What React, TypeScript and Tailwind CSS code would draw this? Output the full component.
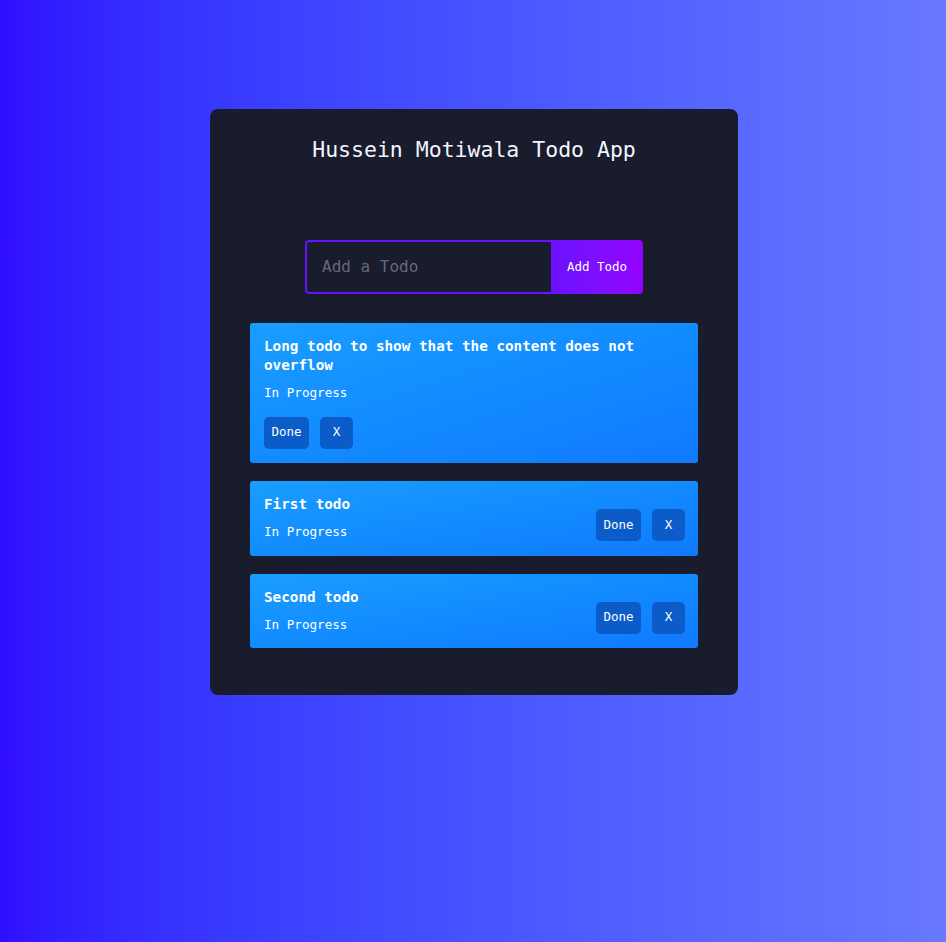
import { useState } from "react";

type Todo = { id: number; title: string; status: string };

const initialTodos: Todo[] = [
  { id: 1, title: "Long todo to show that the content does not overflow", status: "In Progress" },
  { id: 2, title: "First todo", status: "In Progress" },
  { id: 3, title: "Second todo", status: "In Progress" },
];

export default function App() {
  const [todos, setTodos] = useState(initialTodos);
  const [text, setText] = useState("");

  const addTodo = () => {
    if (!text.trim()) return;
    setTodos([...todos, { id: Date.now(), title: text, status: "In Progress" }]);
    setText("");
  };

  return (
    <div
      className="min-h-screen w-full bg-linear-to-r from-[#300dff] to-[#6878ff] pt-[109px] pl-[2px]"
      style={{ fontFamily: '"DejaVu Sans Mono", "Liberation Mono", monospace' }}
    >
      <div className="mx-auto w-[528px] rounded-lg bg-[#181c2d] px-10 pt-[27px] pb-[47px]">
        <h1 className="text-center text-[21.5px] leading-[28px] text-[#f4f4ff]">
          Hussein Motiwala Todo App
        </h1>

        {/* Add todo form */}
        <div className="mt-[76px] flex justify-center">
          <div className="flex h-[54px] w-[338px] overflow-hidden rounded-[4px]">
            <input
              value={text}
              onChange={(e) => setText(e.target.value)}
              placeholder="Add a Todo"
              className="w-[246px] rounded-l-[4px] border-2 border-r-0 border-[#6a12ff] bg-transparent px-[15px] text-[16px] text-white outline-none placeholder:text-[#666a78]"
            />
            <button
              onClick={addTodo}
              className="flex-1 bg-linear-to-r from-[#6a10ff] to-[#9302ff] text-[12.5px] text-white"
            >
              Add Todo
            </button>
          </div>
        </div>

        {/* Todo list */}
        <div className="mt-[29px] flex flex-col gap-[18px]">
          {todos.map((todo) => (
            <div
              key={todo.id}
              className="flex flex-wrap items-end justify-between gap-y-[14.5px] rounded-[3px] bg-linear-to-br from-[#1a9dff] to-[#1179ff] pl-[14px] pr-[13px] pt-[14px] pb-[14.5px] text-white"
            >
              <div className="flex flex-col gap-[9px]">
                <div className="text-[14.3px] leading-[19px] font-bold">{todo.title}</div>
                <div className="text-[12.6px] leading-[18px]">{todo.status}</div>
              </div>
              <div className="flex gap-[11px]">
                <button className="h-8 w-[45px] rounded-[5px] bg-[#0b5bc8] text-[12.5px] text-white">
                  Done
                </button>
                <button
                  onClick={() => setTodos(todos.filter((t) => t.id !== todo.id))}
                  className="h-8 w-[33px] rounded-[5px] bg-[#0b5bc8] text-[12.5px] text-white"
                >
                  X
                </button>
              </div>
            </div>
          ))}
        </div>
      </div>
    </div>
  );
}
